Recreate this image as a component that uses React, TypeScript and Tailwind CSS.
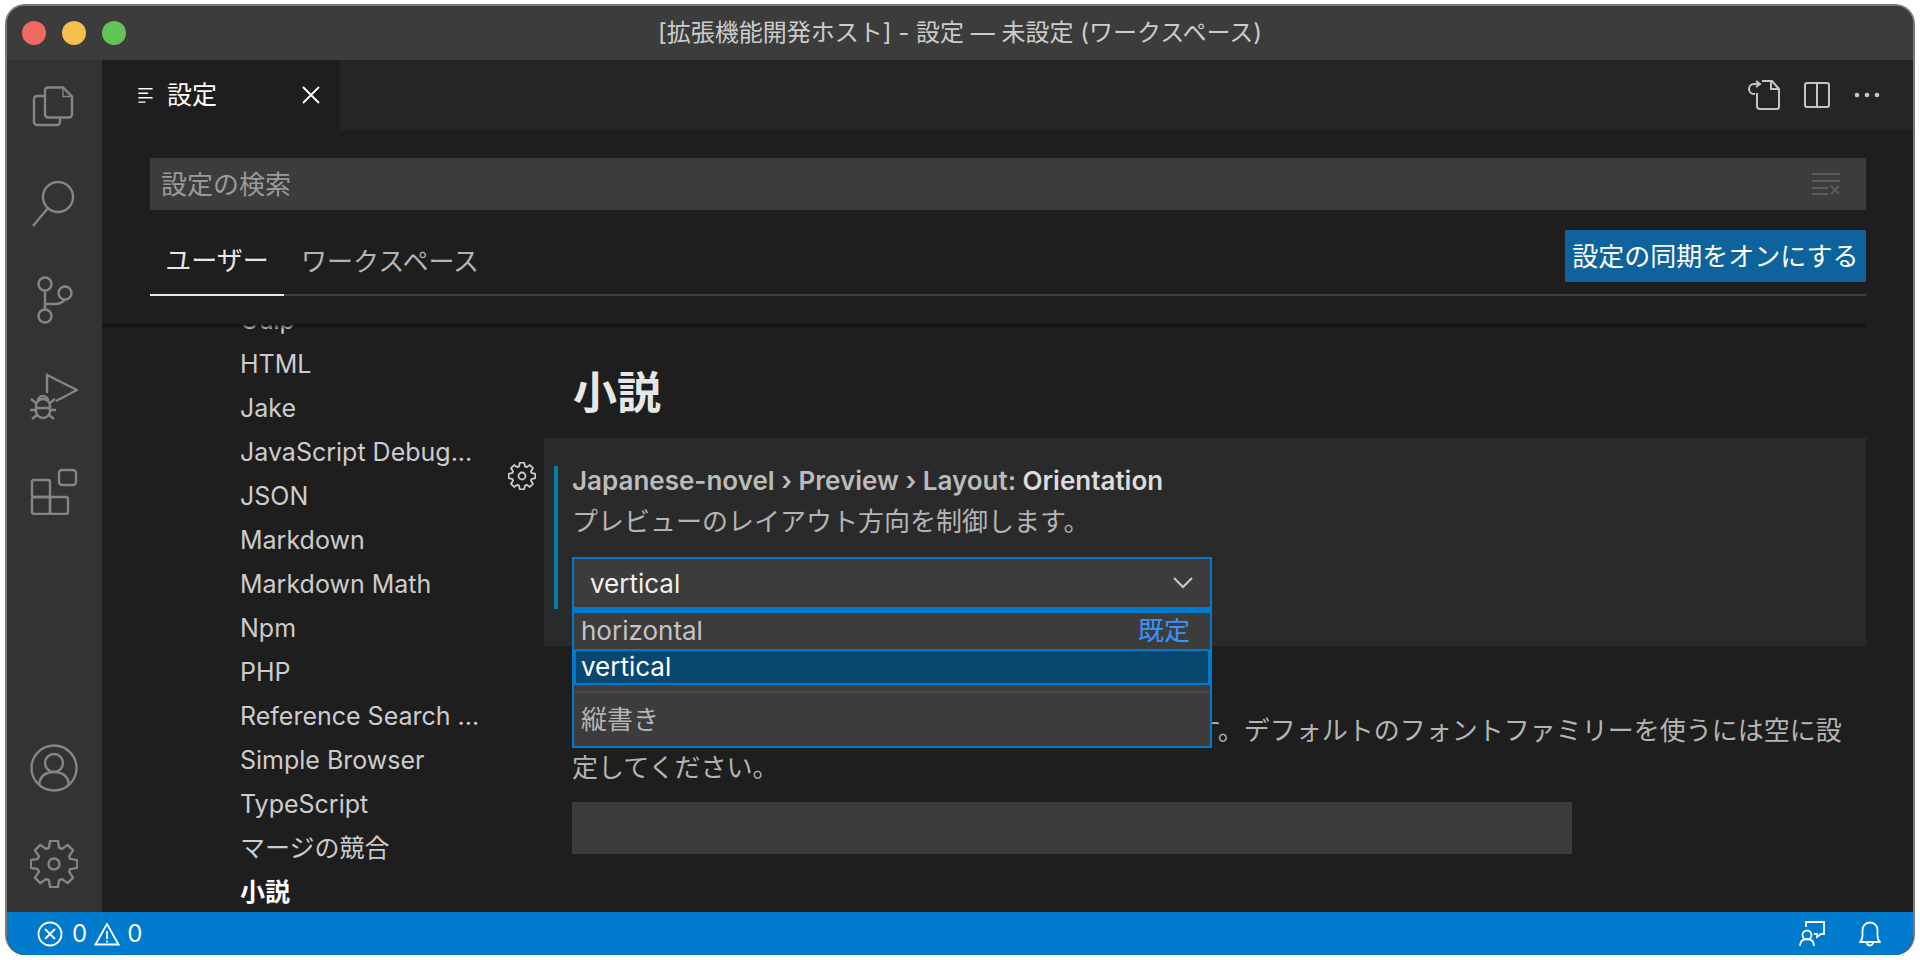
const JP = "font-['Inter','Noto_Sans_CJK_JP',sans-serif]";

const categories = [
  "Gulp",
  "HTML",
  "Jake",
  "JavaScript Debug...",
  "JSON",
  "Markdown",
  "Markdown Math",
  "Npm",
  "PHP",
  "Reference Search ...",
  "Simple Browser",
  "TypeScript",
  "マージの競合",
];

// 8 toothed gear outline, used by the activity bar and the setting row
function gearPath(c: number, outer: number, inner: number) {
  const pts: string[] = [];
  for (let i = 0; i < 8; i++) {
    const a = (i * Math.PI) / 4 - Math.PI / 2;
    const step = Math.PI / 8;
    const corners: [number, number][] = [
      [inner, a - step * 0.78],
      [outer, a - step * 0.42],
      [outer, a + step * 0.42],
      [inner, a + step * 0.78],
    ];
    corners.forEach(([r, t]) => {
      pts.push(`${(c + r * Math.cos(t)).toFixed(2)} ${(c + r * Math.sin(t)).toFixed(2)}`);
    });
  }
  return `M${pts.join("L")}Z`;
}

function Icon({ children, className }: { children: React.ReactNode; className: string }) {
  return (
    <svg viewBox="0 0 48 48" fill="none" stroke="currentColor" strokeWidth={2.4} className={className}>
      {children}
    </svg>
  );
}

function ActivityBar() {
  return (
    <div className="flex w-[95px] shrink-0 flex-col items-center justify-between bg-[#333333] text-[#858585]">
      <div className="-ml-[2px] flex flex-col items-center gap-[49px] pt-[22px]">
        <Icon className="h-[48px] w-[48px]">
          <path d="M15 8.500a3 3 0 0 1 3-3h15l9 9v18a3 3 0 0 1-3 3H18a3 3 0 0 1-3-3z" />
          <path d="M33 5.500v9h9" strokeWidth={1.4} />
          <path d="M15 14H7a3 3 0 0 0-3 3v23a3 3 0 0 0 3 3h20a3 3 0 0 0 3-3v-5" />
        </Icon>
        <Icon className="h-[48px] w-[48px]">
          <circle cx="28" cy="18" r="15" />
          <path d="M18 29 3 47" />
        </Icon>
        <Icon className="h-[48px] w-[48px]">
          <circle cx="15" cy="8" r="6.500" />
          <circle cx="35" cy="17" r="6.500" />
          <circle cx="15" cy="40" r="6.500" />
          <path d="M15 15v18M15 28h10c5 0 8-2 10-4.500" />
        </Icon>
        <Icon className="-mb-[3px] h-[48px] w-[48px]">
          <path d="M17 20V2l30 15-21 11" />
          <path d="M6 33a7 7 0 0 1 14 0v5a7 7 0 0 1-14 0zM8 28a5 5 0 0 1 10 0M6 35h14" />
          <path d="M1 26l5 4M25 26l-5 4M0 37h6M26 37h-6M2 46l5-4M24 46l-5-4" />
        </Icon>
        <Icon className="h-[48px] w-[48px]">
          <rect x="2" y="13" width="18" height="17" rx="2" />
          <rect x="2" y="30" width="18" height="17" rx="2" />
          <rect x="20" y="30" width="18" height="17" rx="2" />
          <rect x="29" y="3" width="17" height="15" rx="3" />
        </Icon>
      </div>
      <div className="-ml-[2px] flex flex-col items-center gap-[48px] pb-[24px]">
        <Icon className="h-[48px] w-[48px]">
          <circle cx="24" cy="24" r="22.500" />
          <circle cx="24" cy="19" r="9" />
          <path d="M9 41c1-9 7-13 15-13s14 4 15 13" />
        </Icon>
        <Icon className="h-[48px] w-[48px]">
          <path d={gearPath(24, 23.5, 17)} strokeLinejoin="round" />
          <circle cx="24" cy="24" r="5.500" />
        </Icon>
      </div>
    </div>
  );
}

function TabBar() {
  return (
    <div className="flex h-[70px] shrink-0 bg-[#252526]">
      <div className="flex w-[238px] items-center bg-[#1e1e1e] pl-[35px] text-white">
        <svg viewBox="0 0 18 18" className="h-[16px] w-[17px]" stroke="currentColor" strokeWidth={1.6} fill="none">
          <path d="M1 2h16M1 7h11M1 12h16M1 17h8" />
        </svg>
        <span className={`${JP} ml-[13px] text-[25px] leading-none`}>設定</span>
        <svg viewBox="0 0 18 18" className="ml-[85px] h-[18px] w-[18px]" stroke="currentColor" strokeWidth={1.8} fill="none">
          <path d="M1 1l16 16M17 1 1 17" />
        </svg>
      </div>
      <div className="ml-auto flex items-center gap-[24px] pr-[33px] text-[#c5c5c5]">
        <svg viewBox="0 0 32 30" className="h-[30px] w-[32px]" stroke="currentColor" strokeWidth={2} fill="none">
          <path d="M9 13v13a3 3 0 0 0 3 3h17a2 2 0 0 0 2-2V9l-7-8H14" />
          <path d="M23 1v8h8M11 4H6a4 4 0 0 0 0 10h1M8 1l4 3-4 3" />
        </svg>
        <svg viewBox="0 0 26 26" className="h-[26px] w-[26px]" stroke="currentColor" strokeWidth={2} fill="none">
          <rect x="1" y="1" width="24" height="24" rx="2" />
          <path d="M13 1v24" />
        </svg>
        <svg viewBox="0 0 26 6" className="h-[6px] w-[26px]" fill="currentColor">
          <circle cx="3" cy="3" r="2.300" />
          <circle cx="13" cy="3" r="2.300" />
          <circle cx="23" cy="3" r="2.300" />
        </svg>
      </div>
    </div>
  );
}

function SettingsHeader() {
  return (
    <div className="relative z-10 ml-[48px] mr-[47px] flex h-[194px] shrink-0 flex-col pt-[28px]">
      <div className="flex h-[52px] items-center justify-between bg-[#3c3c3c] pl-[11px] pr-[26px]">
        <span className={`${JP} text-[26px] text-[#9a9a9a]`}>設定の検索</span>
        <svg viewBox="0 0 28 22" className="h-[22px] w-[28px] text-[#5c5c5c]" stroke="currentColor" strokeWidth={2} fill="none">
          <path d="M0 1h28M0 8h28M0 15h16M0 21h16M19 13l8 8M27 13l-8 8" />
        </svg>
      </div>
      <div className="mt-[20px] flex h-[66px] items-start justify-between border-b-2 border-[#3f3f3f]">
        <div className={`${JP} flex text-[26px] leading-none`}>
          <div className="-mb-[2px] flex h-[66px] w-[134px] items-center justify-center border-b-2 border-[#e7e7e7] pb-[2px] text-[#e7e7e7]">
            ユーザー
          </div>
          <div className="flex h-[64px] items-center pl-[17px] text-[#b4b4b4]">ワークスペース</div>
        </div>
        <button className={`${JP} h-[52px] w-[301px] bg-[#0e639c] text-[26px] text-white`}>設定の同期をオンにする</button>
      </div>
      {/* scroll shadow under the sticky header, lies over the list */}
      <div className="absolute -left-[48px] -right-0 top-full h-[5px] bg-gradient-to-b from-[#111111] to-transparent" />
    </div>
  );
}

function Sidebar() {
  return (
    <div className="-mt-[26px] w-[442px] shrink-0 overflow-hidden pl-[138px]">
      <div className={`${JP} text-[25px] leading-[44px] text-[#cccccc]`}>
        {categories.map((c) => (
          <div key={c} className="h-[44px] whitespace-nowrap">
            {c}
          </div>
        ))}
        <div className="h-[44px] font-bold text-white">小説</div>
      </div>
    </div>
  );
}

function Dropdown() {
  return (
    <div className={`${JP} absolute left-0 top-[171px] z-20 w-[640px] border-2 border-t-[4px] border-[#007acc] bg-[#3c3c3c] text-[26px] leading-none`}>
      <div className="flex h-[36px] items-center justify-between pl-[7px] pr-[20px] text-[#c4c4c4]">
        <span>horizontal</span>
        <span className="text-[#3794ff]">既定</span>
      </div>
      <div className="flex h-[36px] items-center border-2 border-[#007acc] bg-[#094771] pl-[5px] text-white">vertical</div>
      <div className="mt-[6px] border-t-2 border-[#484848]" />
      <div className="flex h-[53px] items-center pl-[7px] text-[#b4b4b4]">縦書き</div>
    </div>
  );
}

function SettingsBody() {
  return (
    <div className="min-w-0 flex-1 pr-[47px]">
      <h1 className={`${JP} ml-[29px] pt-[39px] text-[44px] font-bold leading-[60px] text-[#e7e7e7]`}>小説</h1>
      <div className="relative mt-[15px]">
        <div className="relative h-[208px] bg-[#2a2a2a] pl-[10px] pt-[30px]">
          <div className="border-l-4 border-[#007fa8] pl-[14px]">
            <div className={`${JP} -mt-[2px] text-[26px] font-semibold leading-[30px] text-[#bcbcbc]`}>
              Japanese-novel › Preview › Layout: <span className="text-[#dcdcdc]">Orientation</span>
            </div>
            <div className={`${JP} mt-[9px] text-[26px] leading-[34px] text-[#b4b4b4]`}>プレビューのレイアウト方向を制御します。</div>
            <div className={`${JP} mt-[18px] flex h-[52px] w-[640px] items-center justify-between border-2 border-[#007acc] bg-[#3c3c3c] pl-[16px] pr-[17px] text-[26px] text-[#f0f0f0]`}>
              <span>vertical</span>
              <svg viewBox="0 0 20 12" className="h-[12px] w-[20px] text-[#cccccc]" stroke="currentColor" strokeWidth={2} fill="none">
                <path d="M1 1l9 9 9-9" />
              </svg>
            </div>
          </div>
        </div>
        <svg viewBox="0 0 28 28" className="absolute -left-[36px] top-[24px] h-[28px] w-[28px] text-[#cccccc]" stroke="currentColor" strokeWidth={1.8} fill="none">
          <path d={gearPath(14, 13.5, 10)} strokeLinejoin="round" />
          <circle cx="14" cy="14" r="3.500" />
        </svg>
        <div className="absolute left-[28px] top-0">
          <Dropdown />
        </div>
      </div>
      <div className={`${JP} ml-[28px] mt-[66px] max-w-[1280px] text-[26px] leading-[37px] text-[#b4b4b4]`}>
        プレビューで使用するフォントファミリーを制御します。デフォルトのフォントファミリーを使うには空に設定してください。
      </div>
      <div className="ml-[28px] mt-[16px] h-[52px] w-[1000px] bg-[#3c3c3c]" />
    </div>
  );
}

function StatusBar() {
  return (
    <div className="flex h-[43px] shrink-0 items-center bg-[#007acc] pl-[30px] pr-[32px] text-white">
      <svg viewBox="0 0 26 26" className="h-[26px] w-[26px]" stroke="currentColor" strokeWidth={1.8} fill="none">
        <circle cx="13" cy="13" r="11.500" />
        <path d="M8 8l10 10M18 8 8 18" />
      </svg>
      <span className="ml-[9px] font-['Inter',sans-serif] text-[24px]">0</span>
      <svg viewBox="0 0 26 24" className="ml-[7px] h-[24px] w-[26px]" stroke="currentColor" strokeWidth={1.8} fill="none">
        <path d="M13 2 1.500 22.500h23zM13 9v8M13 18.500v2" />
      </svg>
      <span className="ml-[7px] font-['Inter',sans-serif] text-[24px]">0</span>
      <div className="ml-auto flex items-center gap-[34px]">
        <svg viewBox="0 0 26 26" className="h-[26px] w-[26px]" stroke="currentColor" strokeWidth={1.8} fill="none">
          <path d="M7 6V1h18v12h-3l-4 3v-3h-3" />
          <circle cx="8" cy="14" r="4.500" />
          <path d="M1 25c0-5 3-7 7-7s7 2 7 7" />
        </svg>
        <svg viewBox="0 0 22 26" className="h-[26px] w-[22px]" stroke="currentColor" strokeWidth={1.8} fill="none">
          <path d="M1 21c2-2 2.500-3 2.500-6V9a7.500 7.500 0 0 1 15 0v6c0 3 .5 4 2.500 6z" strokeLinejoin="round" />
          <path d="M8 21.500a3 3 0 0 0 6 0" />
        </svg>
      </div>
    </div>
  );
}

export default function App() {
  return (
    <div className="h-[960px] w-[1920px] overflow-hidden bg-white pb-[5px] pl-[5px] pr-[5px] pt-[4px]">
      <div className="flex h-full w-full flex-col overflow-hidden rounded-[20px] border-x-2 border-t-2 border-[#7a7a7a] bg-[#1e1e1e]">
        <div className="relative flex h-[54px] shrink-0 items-center justify-center bg-[#3c3c3c]">
          <div className="absolute left-[15px] flex gap-[16px]">
            <span className="h-[24px] w-[24px] rounded-full bg-[#ee6a5f]" />
            <span className="h-[24px] w-[24px] rounded-full bg-[#f5be4f]" />
            <span className="h-[24px] w-[24px] rounded-full bg-[#61c454]" />
          </div>
          <span className={`${JP} text-[24px] text-[#cccccc]`}>[拡張機能開発ホスト] - 設定 — 未設定 (ワークスペース)</span>
        </div>
        <div className="flex min-h-0 flex-1">
          <ActivityBar />
          <div className="flex min-w-0 flex-1 flex-col">
            <TabBar />
            <SettingsHeader />
            <div className="flex min-h-0 flex-1 overflow-hidden">
              <Sidebar />
              <SettingsBody />
            </div>
          </div>
        </div>
        <StatusBar />
      </div>
    </div>
  );
}
